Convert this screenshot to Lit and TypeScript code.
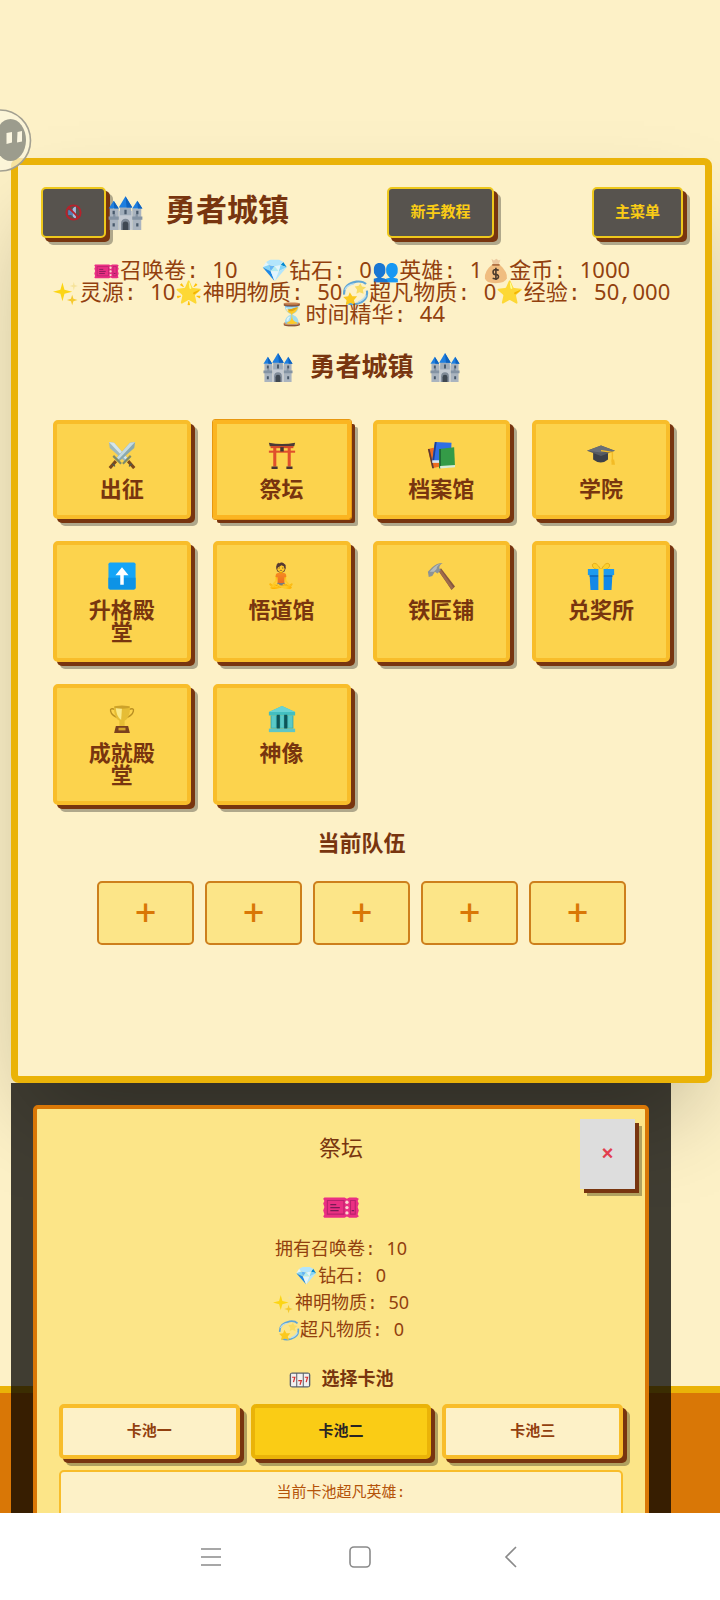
import { LitElement, html, svg, css } from "lit";
import type { TemplateResult } from "lit";
import { customElement, state } from "lit/decorators.js";

// Digits use a proportional face; everything else stays on the monospace grid.
const mono = (text: string) =>
  text.split(/(\d+)/).map((part) => (/^\d+$/.test(part) ? html`<span class="num">${part}</span>` : part));

// Pictograms, each on a 32 x 32 grid.
const ART: Record<string, TemplateResult> = {
  castle: svg`
    <path d="M2 12h8v19H2zM22 12h8v19h-8z" fill="#aab4bf"/>
    <path d="M10 14h12v17H10z" fill="#c3c9d1"/>
    <path d="M11 9h10v9H11z" fill="#9facb9"/>
    <path d="M16 1l6 10H10zM5.500 5l4.500 7H1zM26.500 5l4.500 7h-9z" fill="#1e7fe0"/>
    <path d="M16 1l6 10h-5zM5.500 5l4.500 7H6zM26.500 5l4.500 7h-4z" fill="#0f62bd"/>
    <path d="M1 19h4v-2h2v2h3v3H1zM22 19h3v-2h2v2h4v3h-9z" fill="#8493a3"/>
    <path d="M12 31v-6a4 4 0 018 0v6z" fill="#7f8a97"/><path d="M13.500 31v-5a2.500 2.500 0 015 0v5z" fill="#3f4852"/>
    <path d="M15 13h2v4h-2zM4.500 14h2v3h-2zM25.500 14h2v3h-2zM4.500 25h2v3h-2zM25.500 25h2v3h-2z" fill="#48596b"/>`,
  ticket: svg`
    <path d="M2 8h17l2 1 2-1h6l2 1-1 2 1 2-1 3 1 3-1 3 1 2-2 1h-6l-2-1-2 1H2l-1-1 1-2-1-3 1-3-1-3 1-2-1-2z" fill="#ea2f83"/>
    <path d="M4.500 10.500h14v11.500h-14zM24 10.500h4v11.500h-4z" fill="none" stroke="#b8226d" stroke-width="0.900"/>
    <path d="M7 14h5M7 16.500h8M7 19h7M25 19h2" stroke="#7a1a55" stroke-width="1"/>
    <g fill="#fbd8d0"><circle cx="21" cy="12" r="1.400"/><circle cx="21" cy="16.500" r="1.400"/><circle cx="21" cy="21" r="1.400"/></g>`,
  swords: svg`
    <path d="M1 1l6 1 16 18-4 3L2 8z" fill="#9fb9bd"/><path d="M1 1l6 1 15 17-2 2z" fill="#d6e6ea"/>
    <path d="M31 1l-6 1L9 20l4 3L30 8z" fill="#8aa9ae"/><path d="M31 1l-6 1L10 19l2 2z" fill="#c6dbe0"/>
    <path d="M6 17l9 9M26 17l-9 9" stroke="#7d8a6a" stroke-width="2.500"/>
    <path d="M9 23l-7 8M23 23l7 8" stroke="#7c4a1d" stroke-width="3.500"/>
    <path d="M5 26l3 3M27 26l-3 3" stroke="#4a5a55" stroke-width="1.500"/>`,
  torii: svg`
    <path d="M1 2q15 3 30 0l-1 4q-14 1-28 0z" fill="#4b3a37"/><path d="M3 5.800h26v2.400H3z" fill="#d5492a"/>
    <path d="M1 11h30v2.400H1z" fill="#e0502c"/><path d="M14 7h4v5h-4z" fill="#463432"/>
    <path d="M6 8h3.500v21H6zM22.500 8H26v21h-3.500z" fill="#e0502c"/>
    <path d="M4 29h7v3H4zM21 29h7v3h-7z" fill="#463432"/>`,
  books: svg`
    <path d="M1 9l9-2 5 22-9 2z" fill="#ee6c1f"/><path d="M1 9l2 0 5 22-2 0z" fill="#5a3a34"/>
    <path d="M9 1l19 1-1 22-21-1z" fill="#2f6fe4"/><path d="M9 1l2 0-3 22H6z" fill="#1c3f94"/>
    <path d="M6 22h8v3H6z" fill="#dbe6ee"/>
    <path d="M14 9l17-2 1 22-18 2z" fill="#349b47"/><path d="M14 9l2 0v22h-2z" fill="#1f6b34"/>
    <path d="M15 28.500l17-1v2.500l-17 1.500z" fill="#d9ecd9"/>`,
  cap: svg`
    <path d="M7 12v9q9 7 17 0v-9z" fill="#3d4148"/><path d="M16 5l16 6-16 6L0 11z" fill="#565b62"/>
    <path d="M16 5l16 6-16 2L0 11z" fill="#6a6f76"/>
    <path d="M16 11l13 2v11" fill="none" stroke="#f3bb26" stroke-width="1.600"/><path d="M28 21h3l1 6h-4z" fill="#f3bb26"/>`,
  up: svg`
    <rect x="0.500" y="0.500" width="31" height="31" rx="2" fill="#14a5f7"/><path d="M0.500 18h31v11.500a2 2 0 01-2 2h-27a2 2 0 01-2-2z" fill="#0d93e6"/>
    <path d="M16 6l7.500 9H18v11h-4V15H8.500z" fill="#fff"/>`,
  hammer: svg`
    <path d="M13 10l3-3 16 21-4 4z" fill="#86573f"/><path d="M14 11l2-2 14 20-2 2z" fill="#a06b4c"/>
    <path d="M1 11l5-5q5-5 12-5-4 2-4 6l2 2-4 4-3-2-3 5-4 1z" fill="#8c9396"/><path d="M3 11l5-5q4-4 8-4-5 2-5 6l-3 3z" fill="#b5bbbd"/>`,
  gift: svg`
    <path d="M16 9Q6 9 6 3q4-5 10 6zM16 9q10 0 10-6-4-5-10 6z" fill="#fbd02d" stroke="#e5a818" stroke-width="1"/>
    <path d="M1 8h30v7H1z" fill="#1d9bef"/><path d="M3 15h26l-1 17H4z" fill="#1388e6"/>
    <path d="M3 15h26v2H3z" fill="#0a6cc4"/><path d="M13 8h6v24h-6z" fill="#fcd63a"/>`,
  trophy: svg`
    <path d="M8 5Q2 3 3 7q1 5 9 8M24 5q6-2 5 2-1 5-9 8" fill="none" stroke="#b98f22" stroke-width="1.600"/>
    <path d="M7 1h18q1 13-6 17v6h-6v-6Q6 14 7 1z" fill="#e6bd35"/><path d="M9 3h7l-1 14Q9 12 9 3z" fill="#fae988"/>
    <ellipse cx="16" cy="2.500" rx="9" ry="1.800" fill="#cda22a"/>
    <path d="M9 24h14l2 8H7z" fill="#7a401e"/><path d="M12 26h8v3h-8z" fill="#d6a42a"/>`,
  temple: svg`
    <path d="M16 1l15 7v4H1V8z" fill="#43bfc0"/><path d="M16 1l15 7H1z" fill="#69d3d3"/>
    <path d="M3 12h26v15H3z" fill="#37a8aa"/><path d="M4 12h5v14H4zM14 12h4v14h-4zM23 12h5v14h-5z" fill="#5ac9c8"/>
    <path d="M10 11h3.500v16H10zM18.500 11H22v16h-3.500z" fill="#0d5458"/><path d="M1 27h30v4H1z" fill="#5fc6c6"/>`,
  slots: svg`
    <rect x="1" y="5" width="30" height="22" rx="4" fill="#59606a"/>
    <path d="M3 7h7.500v18H3zM12 7h8v18h-8zM21.500 7H29v18h-7.500z" fill="#f1f1f1"/>
    <path d="M4.500 12h4l-2 7M23 12h4l-2 7M13.500 17h4.500l-2 6" fill="none" stroke="#d8302f" stroke-width="1.800"/>`,
  money: svg`
    <path d="M11 1l3 2 3-2 3 2 2-1-2 6h-7z" fill="#ecc9a0"/><path d="M12 8h9q10 9 9 17-2 6-14 6T3 25q-1-9 9-17z" fill="#f0bd80"/>
    <path d="M12 7.500h9v2h-9z" fill="#a9673a"/><path d="M20 15q-7-2-7 2t3.500 3q4 1 3 4t-7 1M16.500 12v15" fill="none" stroke="#4b3a2b" stroke-width="2"/>`,
  sparkles: svg`
    <path d="M11 3l2.500 9 9.500 2.500-9.500 2.500L11 26l-2.500-9L-1 14.500 8.500 12z" fill="#fcd515"/>
    <path d="M23 18l1.500 5 5 1.500-5 1.500L23 31l-1.500-5-5-1.500 5-1.500z" fill="#f5c92f"/>
    <path d="M25 2l1 4 4 1.500-4 1L25 13l-1-4.500-4-1 4-1.500z" fill="#f6e39a"/>`,
  dizzy: svg`
    <path d="M2 18Q1 5 17 2q8-1 12 3M30 13q2 12-11 16-8 2-14-1" fill="none" stroke="#5fa6d6" stroke-width="2.600"/>
    <path d="M3 12Q6 6 14 5M29 19q-3 6-10 8" fill="none" stroke="#b9dced" stroke-width="1.800"/>
    <path d="M9 15l3 5 6 0-4 5 2 6-6-3-6 3 1-6-4-4 6-1z" fill="#fbc91f"/>
    <path d="M22 4l2 4 5 1-4 3 1 5-5-2-4 2 1-5-3-4 5-1z" fill="#f8dc62"/>`,
  mute: svg`
    <path d="M7 12h5l8-7v22l-8-7H7z" fill="#5a7fb5"/><path d="M15 9l5-4v22l-5-4z" fill="#a9bcdb"/>
    <circle cx="16" cy="16" r="12" fill="none" stroke="#b5222c" stroke-width="3.200"/><path d="M7 7l18 18" stroke="#b5222c" stroke-width="3.200"/>`,
};

// A pictogram from the set above, or the emoji itself when there is none.
const glyph = (name: string) =>
  ART[name]
    ? html`<svg class="pic" viewBox="0 0 32 32" aria-hidden="true">${ART[name]}</svg>`
    : html`<span class="emoji">${name}</span>`;

@customElement("app-root")
export class AppRoot extends LitElement {
  static styles = css`
    :host {
      display: block;
      --cream: #fdf1c7;
      --gold: #eab308;
      --amber: #f8bd2a;
      --brown: #78350f;
      --drop: 4px 4px 0 #78350f, 7px 7px 0 rgba(0, 0, 0, 0.3);
      font-family: "Liberation Mono", "Noto Sans CJK SC", "Noto Color Emoji", monospace;
      color: var(--brown);
    }
    * { box-sizing: border-box; }
    h1, h2, h3, p, ul { margin: 0; padding: 0; }
    ul { list-style: none; }
    button { font-family: inherit; margin: 0; cursor: pointer; }
    .num { font-family: "Noto Sans", sans-serif; line-height: 0; }
    .pic { display: block; flex: none; margin-bottom: 4px; }

    .screen { display: flex; flex-direction: column; height: 100vh; }
    .stage {
      position: relative;
      flex: 1;
      min-height: 0;
      overflow: hidden;
      padding: 158px 8px 0 11px;
      background: var(--cream);
    }
    .ground {
      position: absolute;
      inset: auto 0 0 0;
      height: 127px;
      border-top: 7px solid var(--gold);
      background: #d97706;
    }
    .floater { position: absolute; left: 0; top: 109px; }

    .panel {
      position: relative;
      min-height: 925px;
      padding: 22px;
      border: 7px solid var(--gold);
      border-radius: 8px;
      background: var(--cream);
      box-shadow: 0 46px 92px -22px rgba(0, 0, 0, 0.28);
    }
    .top { display: flex; justify-content: space-between; align-items: center; padding-left: 1px; }
    .brand { display: flex; align-items: center; }
    h1 { display: flex; align-items: center; gap: 20px; font-size: 31px; line-height: 44px; }
    h1 .pic { width: 39px; height: 36px; margin-bottom: 0; }
    .dark {
      height: 51px;
      padding: 0 21px 4px;
      border: 2px solid #eec81c;
      border-radius: 5px;
      background: #57534e;
      color: #facc15;
      font-size: 15px;
      font-weight: 700;
      box-shadow: var(--drop);
    }
    .dark .pic { width: 19px; height: 19px; margin: 4px 0 0; }
    .stats {
      display: flex;
      flex-wrap: wrap;
      justify-content: center;
      margin-top: 24px;
      font-size: 22px;
      line-height: 22px;
      color: #92400e;
    }
    .stat { display: flex; align-items: center; height: 22px; white-space: pre; }
    .stat .pic { width: 27px; height: 26px; }
    .stat.wide { margin-right: 24px; }
    h2 {
      display: flex;
      justify-content: center;
      align-items: center;
      gap: 15px;
      margin-top: 23px;
      font-size: 26px;
      line-height: 36px;
    }
    h2 .pic { width: 32px; height: 31px; }

    .tiles {
      display: grid;
      grid-template-columns: repeat(4, 1fr);
      gap: 22px;
      margin: 33px 13px 0;
    }
    .tile {
      display: flex;
      flex-direction: column;
      align-items: center;
      gap: 8px;
      padding: 16px 22px 12px;
      border: 4px solid var(--amber);
      border-radius: 5px;
      background: #fcd34d;
      color: var(--brown);
      font-size: 22px;
      line-height: 22px;
      font-weight: 700;
      box-shadow: var(--drop);
    }
    .tile.active { border-color: #fbb521; outline: 1px solid #e8980f; border-radius: 2px; }
    .sign { display: grid; place-items: center; height: 33px; font-size: 24px; line-height: 33px; font-weight: 400; }
    .sign .pic { width: 28px; height: 28px; }

    h3 {
      display: flex;
      justify-content: center;
      align-items: center;
      margin-top: 30px;
      font-size: 22px;
      line-height: 22px;
    }
    .team { display: flex; justify-content: center; gap: 11px; margin-top: 24px; }
    .slot {
      width: 97px;
      height: 64px;
      padding: 0 0 4px;
      border: 2px solid #cd7f1c;
      border-radius: 5px;
      background: #fce588;
      color: #d97706;
      font-family: "Noto Sans", sans-serif;
      font-size: 38px;
      font-weight: 500;
      line-height: 40px;
    }

    .veil {
      position: relative;
      margin-right: 41px;
      padding: 22px 22px 0;
      background: rgba(0, 0, 0, 0.75);
    }
    .altar {
      position: relative;
      height: 600px;
      padding: 24px 22px 22px;
      border: 4px solid #d97706;
      border-radius: 5px;
      background: #fce588;
    }
    .altar .name { margin-top: 0; font-size: 22px; font-weight: 400; }
    .close {
      position: absolute;
      top: 10px;
      right: 10px;
      width: 55px;
      height: 70px;
      border: 0;
      background: #ddd;
      color: #e23e4f;
      font-size: 20px;
      font-weight: 700;
      box-shadow: var(--drop);
    }
    .ticket { display: grid; place-items: center; height: 44px; margin-top: 16px; }
    .ticket .pic { width: 38px; height: 38px; margin-bottom: 0; }
    .owned { margin-top: 8px; font-size: 18px; line-height: 27px; color: #92400e; }
    .owned li { display: flex; justify-content: center; align-items: center; height: 27px; white-space: pre; }
    .owned .pic { width: 22px; height: 21px; margin-bottom: 2px; }
    .altar h3 { gap: 11px; margin-top: 24px; font-size: 18px; }
    .altar h3 .pic { width: 22px; height: 22px; margin-bottom: 0; }
    .pools { display: grid; grid-template-columns: repeat(3, 1fr); gap: 11px; margin-top: 13px; }
    .pool {
      height: 55px;
      padding: 0 0 4px;
      border: 4px solid var(--amber);
      border-radius: 5px;
      background: var(--cream);
      color: #92400e;
      font-size: 15px;
      font-weight: 700;
      box-shadow: var(--drop);
    }
    .pool.on { border-color: var(--gold); background: #facc15; color: #292524; }
    .box {
      height: 200px;
      margin-top: 11px;
      padding: 11px;
      border: 2px solid var(--amber);
      border-radius: 5px;
      background: var(--cream);
      color: #b45309;
      font-size: 15px;
      line-height: 22px;
      text-align: center;
    }

    .keys {
      display: flex;
      justify-content: center;
      align-items: center;
      gap: 118px;
      height: 87px;
      background: #fff;
    }
    .key { display: block; width: 32px; height: 32px; padding: 0; border: 0; background: none; }
    .key svg { display: block; }
  `;

  @state() private pool = 1;

  private stats = [
    ["ticket", "召唤卷: 10"], ["💎", "钻石: 0"], ["👥", "英雄: 1"], ["money", "金币: 1000"],
    ["sparkles", "灵源: 10"], ["🌟", "神明物质: 50"], ["dizzy", "超凡物质: 0"], ["⭐", "经验: 50,000"],
    ["⏳", "时间精华: 44"],
  ];

  private owned = [["", "拥有召唤卷: 10"], ["💎", "钻石: 0"], ["sparkles", "神明物质: 50"], ["dizzy", "超凡物质: 0"]];

  private tiles = [
    ["swords", "出征"], ["torii", "祭坛"], ["books", "档案馆"], ["cap", "学院"],
    ["up", "升格殿堂"], ["🧘", "悟道馆"], ["hammer", "铁匠铺"], ["gift", "兑奖所"],
    ["trophy", "成就殿堂"], ["temple", "神像"],
  ];

  render() {
    return html`
      <div class="screen">
        <main class="stage">
          <div class="ground"></div>
          <section class="panel">
            <header class="top">
              <div class="brand">
                <button class="dark" aria-label="静音">${glyph("mute")}</button>
                <h1>${glyph("castle")}<span>勇者城镇</span></h1>
              </div>
              <button class="dark">新手教程</button>
              <button class="dark">主菜单</button>
            </header>
            <ul class="stats">
              ${this.stats.map(
                ([icon, text], i) => html`<li class="stat ${i === 0 ? "wide" : ""}">${glyph(icon)}<span>${mono(text)}</span></li>`
              )}
            </ul>
            <h2>${glyph("castle")}<span>勇者城镇</span>${glyph("castle")}</h2>
            <nav class="tiles">
              ${this.tiles.map(
                ([icon, label]) => html`
                  <button class="tile ${label === "祭坛" ? "active" : ""}">
                    <span class="sign">${glyph(icon)}</span><span>${label}</span>
                  </button>`
              )}
            </nav>
            <h3>当前队伍</h3>
            <div class="team">
              ${[1, 2, 3, 4, 5].map((n) => html`<button class="slot" aria-label="队伍位置 ${n}">+</button>`)}
            </div>
          </section>
          <div class="veil">
            <section class="altar">
              <h2 class="name">祭坛</h2>
              <button class="close" aria-label="关闭">×</button>
              <div class="ticket">${glyph("ticket")}</div>
              <ul class="owned">
                ${this.owned.map(([icon, text]) => html`<li>${icon ? glyph(icon) : ""}<span>${mono(text)}</span></li>`)}
              </ul>
              <h3>${glyph("slots")}<span>选择卡池</span></h3>
              <div class="pools">
                ${["卡池一", "卡池二", "卡池三"].map(
                  (p, i) => html`<button class="pool ${i === this.pool ? "on" : ""}" @click=${() => (this.pool = i)}>${p}</button>`
                )}
              </div>
              <div class="box"><p>当前卡池超凡英雄:</p></div>
            </section>
          </div>
          <svg class="floater" width="32" height="63" viewBox="0 0 32 63">
            <circle cx="0" cy="31.500" r="30.500" fill="#fbf6e0" fill-opacity=".7" stroke="#a3a091" stroke-width="1.600" />
            <ellipse cx="10.500" cy="31" rx="15.500" ry="21" fill="#9c9c8d" />
            <path d="M6.500 24l5.500-1v10.500l-5.500 1.500zM17.500 23l4.500-1v10.500l-5 1z" fill="#fbf6e0" />
          </svg>
        </main>
        <nav class="keys">
          <button class="key" aria-label="菜单"><svg width="32" height="32" fill="none" stroke="#8a8a8a" stroke-width="1.600"><path d="M7 8h20M7 16h20M7 24h20" /></svg></button>
          <button class="key" aria-label="主页"><svg width="32" height="32" fill="none" stroke="#8a8a8a" stroke-width="1.600"><rect x="6" y="6" width="20" height="20" rx="4" /></svg></button>
          <button class="key" aria-label="返回"><svg width="32" height="32" fill="none" stroke="#8a8a8a" stroke-width="1.600"><path d="M22 6L12 16l10 10" /></svg></button>
        </nav>
      </div>
    `;
  }
}
